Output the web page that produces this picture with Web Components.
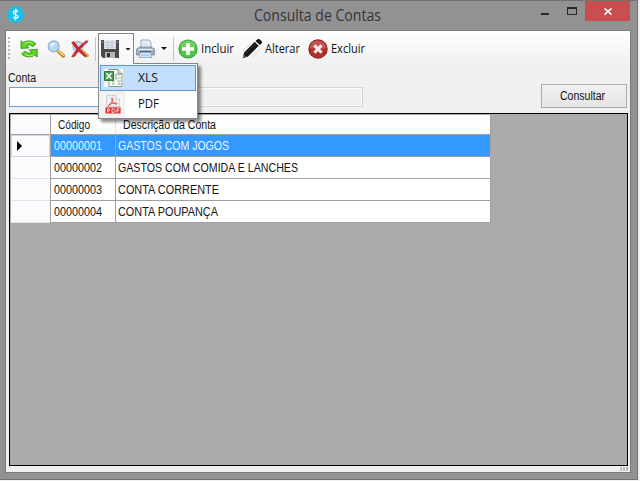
<!DOCTYPE html>
<html lang="pt-BR"><head><meta charset="utf-8"><title>Consulta de Contas</title>
<style>html,body{margin:0;width:640px;height:481px;overflow:hidden;background:#f1f1f1}</style></head><body>
<app-window></app-window>
<script>
const define=(name,html,init)=>customElements.define(name,class extends HTMLElement{
  constructor(){super();this.attachShadow({mode:'open'}).innerHTML=html}
  connectedCallback(){if(init)init.call(this,this.shadowRoot)}
});

// Single-line label condensed or widened to its "w" attribute.
define('fit-text',`<style>:host{display:block;white-space:nowrap;flex:none;line-height:16px}span{display:inline-block;transform-origin:0 50%}</style><span><slot></slot></span>`,function(r){
  const s=r.querySelector('span'),w=+this.getAttribute('w');
  this.style.width=w+'px';
  s.style.transform=`scaleX(${w/s.getBoundingClientRect().width})`;
});

const icons={
app:`<svg viewBox="0 0 18 18"><circle cx="9" cy="9" r="8.5" fill="#16c0ef"/><path d="M11.6 6.2C11.2 4.8 6.9 4.3 6.8 6.8c0 2.3 4.8 1.8 4.8 4.4 0 2.4-4.5 2.3-5.1.3M9.5 2.8 8.8 15" fill="none" stroke="#f4ffff" stroke-width="1.4"/></svg>`,
refresh:`<svg viewBox="0 0 18 18"><g stroke="#258a0c" stroke-width=".8" stroke-linejoin="round" fill="#62d51d"><path d="M1 .8 3.4 2.6C6.5.1 12.5.2 16 3.8L13 6.6C10.8 4.7 8.3 4.4 6.6 5.6L9 7.9 1 8.4Z"/><path d="M17.2 17 14.6 15C11.4 17.8 5.2 17.5 1.6 14L4.8 11.2C7.2 13.2 9.9 13.6 11.6 12.4L9.4 10 17.2 9.2Z"/></g><path d="M4.5 3.6Q8.4.8 12.6 3M13.5 15Q9 17 5 14.5" stroke="#a6f161" fill="none"/></svg>`,
search:`<svg viewBox="0 0 18 18"><path d="m11 11 5.3 4.8" stroke="#b97b2b" stroke-width="3.6" stroke-linecap="round"/><path d="m11.3 10.8 5 4.5" stroke="#ffc85e" stroke-width="2" stroke-linecap="round"/><circle cx="6.7" cy="6.4" r="5.4" fill="#b5daf6" stroke="#9ab6d2" stroke-width="1.4"/><path d="M3 6.5Q3.6 2.8 8 2.7 6.5 6.5 3 6.5" fill="#eef8ff"/></svg>`,
clear:`<svg viewBox="0 0 18 18"><path d="m11 11 5.3 4.8" stroke="#e0a445" stroke-width="3.2" stroke-linecap="round"/><circle cx="7" cy="6.5" r="5" fill="#c6e1f6" stroke="#9db9d3" stroke-width="1.3"/><path d="M.7 2.6 3 1.6Q7 8 15.6 16l-1.5 1Q6 11 .7 2.6M15.5.5 17 1.6Q9 7.5 3.5 16.5L.8 16.8Q6 7.5 15.5.5" fill="#d52a30" stroke="#b9242c" stroke-width=".8"/></svg>`,
save:`<svg viewBox="0 0 18 18"><path d="M0 0h18v18H2L0 16Z" fill="#4b4b4d"/><path d="M3 0h12v9H3Z" fill="#e2e6ec"/><path d="M3 2.5h12M3 5h12M3 7.2h12M7 0v9M11 0v9" stroke="#b8bec8" stroke-width=".7"/><path d="M4 12h10v6H4Z" fill="#b5b5b7"/><path d="M6 13h3v4H6Z" fill="#343436"/><path d="M15.8 1h1.2v2h-1.2M1 1h1v2H1" fill="#888"/></svg>`,
print:`<svg viewBox="0 0 19 19"><path d="M5 9V1h8l2 3v5" fill="#f3f8fe" stroke="#8299b6" stroke-width=".9"/><path d="M6.5 4H12M6.5 6H13" stroke="#bdd1e8"/><path d="M.6 10 4 8h11l3.4 2v6H.6Z" fill="#9dabbb" stroke="#75879a" stroke-width=".8"/><path d="M2 10.5h15" stroke="#eaf0f6" stroke-width="1.2"/><path d="M4 12h11v1.4H4Z" fill="#50657c"/><path d="M4.2 13.4h10.6l1.2 5H3Z" fill="#ddecfd" stroke="#7293bb" stroke-width=".7"/><path d="M5 16h9" stroke="#83afe2"/></svg>`,
add:`<svg viewBox="0 0 20 20"><circle cx="10" cy="10" r="9.6" fill="#36a83a"/><circle cx="10" cy="10" r="8.6" fill="#4fc44b"/><path d="M2 8Q4 1.5 10 1.5T18 8Q10 10 2 8" fill="#83d76b" opacity=".6"/><path d="M8.2 4h3.6v4.2H16v3.6h-4.2V16H8.2v-4.2H4V8.2h4.2Z" fill="#fff"/></svg>`,
edit:`<svg viewBox="0 0 20 20"><path d="m.8 13 8-9M11 18l8-9" stroke="#d4d4d4" stroke-width=".8"/><path d="M.8 19.2 2 13.7 12.7 2.8 16.8 6.8 6 17.6Z" fill="#151515"/><path d="m13.5 2 1.7-1.6Q17-.5 19 1.5t.5 3L17.8 6Z" fill="#111"/><path d="m3.8 14.8 9.8-10M1.2 18.9l1-3 1.8 1.9Z" stroke="#777" stroke-width=".4" fill="#555"/><path d="m12.8 2.8 4.1 4" stroke="#ccc" stroke-width=".6"/></svg>`,
remove:`<svg viewBox="0 0 20 20"><circle cx="10" cy="10" r="9.7" fill="#8b2323"/><circle cx="10" cy="10" r="8.7" fill="#b02f2d"/><path d="M1.8 9Q3 1.5 10 1.5T18.2 9Q10 11 1.8 9" fill="#d77b74" opacity=".5"/><path d="m6.4 6.4 7.2 7.2M13.6 6.4l-7.2 7.2" stroke="#f2eaea" stroke-width="3"/></svg>`,
xls:`<svg viewBox="0 0 19 18"><path d="M5 .5h9l4 4v13H5Z" fill="#fff" stroke="#849c86"/><path d="M14 .5v4h4" fill="#dce8dc" stroke="#78917b"/><path d="M10 6h7M8 9h9M8 12h3M13 12h4M8 15h3M13 15h4M12 4v7M9 12v4M15 12v4" stroke="#a5b8a7"/><path d="M.5 2.5h9v9h-9Z" fill="#4c9c58" stroke="#2f7a3c"/><path d="m2.4 4.3 5 5.4m0-5.4-5 5.4" stroke="#f0fff0" stroke-width="1.5"/></svg>`,
pdf:`<svg viewBox="0 0 18 20"><path d="M2 .5h10l4 4V12H2Z" fill="#eee" stroke="#c4c4c4" stroke-width=".8"/><path d="M12 .5v4h4" fill="#fafafa" stroke="#bbb" stroke-width=".7"/><path d="M4 11.2c3-1.6 5.3-6 4.6-7.6-.6-1-1.5.4-.7 2 .9 2.2 2.8 4.2 4.9 4 1-.4.3-1.3-1.3-1.2-2.3.1-5.4 1-7.2 2.6-.8.8-.6 1.2-.3.2Z" fill="none" stroke="#dc494a" stroke-width="1"/><path d="M1 13h16v6.5H1Z" fill="#df3034"/><path d="M3.5 18.5v-4h1.3q2.3 1.2 0 2.3H3.5M8 14.5v4q3.5 0 3.5-2T8 14.5M13.2 18.5v-4h2.7m-2.7 2h2.2" fill="none" stroke="#fff" stroke-width=".8"/></svg>`
};
customElements.define('ui-icon',class extends HTMLElement{connectedCallback(){
  if(this.shadowRoot)return;
  this.attachShadow({mode:'open'}).innerHTML=`<style>:host{display:block;flex:none}svg{display:block;width:100%;height:100%;overflow:visible}</style>${icons[this.getAttribute('name')]}`}});

define('title-bar',`<style>
:host{display:grid;grid-template-columns:254px 1fr 97px;height:29px;color:#353535;box-sizing:border-box;border-top:1px solid #737173}
ui-icon{width:17px;height:17px;margin:5px 0 0 7px}
fit-text{font:15.5px "Open Sans",sans-serif;line-height:22px;margin-top:3px}
.c{display:flex}.min{flex:none;width:8px;height:2px;background:#282828;margin:12px 18px 0 1px}
.max{flex:none;box-sizing:border-box;width:10px;height:8px;border:1px solid #282828;border-top-width:2px;margin-top:6px}
.close{flex:none;width:45px;height:20px;background:#c84f50;margin-left:8px;display:flex;justify-content:center}
.close svg{width:8px;height:7px;margin-top:7px;margin-left:1px}
</style><ui-icon name="app"></ui-icon><fit-text w="127">Consulta de Contas</fit-text>
<div class="c"><div class="min"></div><div class="max"></div><div class="close"><svg viewBox="0 0 8 8" preserveAspectRatio="none"><path d="m.5 .5 7 7m0-7-7 7" stroke="#fff" stroke-width="1.8"/></svg></div></div>`);

define('export-menu',`<style>
:host{display:block;box-sizing:border-box;width:100px;height:56px;border:1px solid #878787;background:linear-gradient(90deg,#f1f1f1 26px,#fdfdfd 26px);box-shadow:3px 3px 3px #0007;padding:1px;font:12px "Open Sans",sans-serif;color:#111}
div{box-sizing:border-box;height:26px;display:flex;align-items:center;border:1px solid transparent;padding-left:3px}
.on{background:#c2deff;border-color:#5b9acb}ui-icon{width:19px;height:18px;background:#f4f8f8}
.p{width:18px;height:19px;margin-right:1px}fit-text{margin-left:15px}
</style><div class="on"><ui-icon name="xls"></ui-icon><fit-text w="20">XLS</fit-text></div><div><ui-icon class="p" name="pdf"></ui-icon><fit-text w="21">PDF</fit-text></div>`);

define('tool-bar',`<style>
:host{display:flex;height:35px;background:linear-gradient(#fefefe,#f0f0f0);font:12.3px "Open Sans",sans-serif;color:#111;align-items:center;padding-left:2px;box-sizing:border-box}
.grip{width:2px;height:23px;background:repeating-linear-gradient(#b8b8b8 0 2px,transparent 2px 4px);margin-right:10px}
ui-icon{width:18px;height:18px}.big{width:20px;height:20px}
.sep{width:1px;height:24px;background:#c4c4c4}.arr{flex:none;width:6px;height:3px;background:#111;clip-path:polygon(0 0,100% 0,50% 100%)}
.save{position:relative;box-sizing:border-box;width:36px;height:31px;display:flex;align-items:center;border:1px solid #858585;border-bottom:0;padding-left:2px;align-self:flex-end;margin:0 0 2px 2px;background:#f9f9f9}
.save ui-icon{margin-right:6px}export-menu{position:absolute;left:-1px;top:29px;z-index:2}
.gap{position:absolute;z-index:3;left:0;top:29px;width:34px;height:1px;background:#f5f5f5}
</style><div class="grip"></div><ui-icon name="refresh"></ui-icon><ui-icon name="search" style="margin-left:9px"></ui-icon><ui-icon name="clear" style="margin:0 6px"></ui-icon><div class="sep"></div>
<div class="save"><ui-icon name="save"></ui-icon><div class="arr"></div><export-menu></export-menu><div class="gap"></div></div>
<ui-icon name="print" style="width:19px;height:19px;margin:0 6px 0 2px"></ui-icon><div class="arr"></div><div class="sep" style="margin:0 4px 0 6px"></div>
<ui-icon class="big" name="add"></ui-icon><fit-text w="33" style="margin:0 9px 0 3px">Incluir</fit-text>
<ui-icon class="big" name="edit" style="margin-left:-1px"></ui-icon><fit-text w="35" style="margin:0 8px 0 3px">Alterar</fit-text>
<ui-icon class="big" name="remove"></ui-icon><fit-text w="34" style="margin-left:3px">Excluir</fit-text>`);

define('search-form',`<style>
:host{display:grid;grid-template-columns:354px 86px;justify-content:space-between;height:47px;padding:0 3px;font:12px "Liberation Sans",sans-serif;color:#111}
.row{display:flex}.in{box-sizing:border-box;width:102px;height:20px;border:1px solid #6c9fd0;background:#fff}
.ro{box-sizing:border-box;flex:1;height:20px;border:1px solid #d4d4d4;box-shadow:inset 0 0 0 1px #fbfbfb}
.b{box-sizing:border-box;height:24px;margin-top:18px;border:1px solid #acacac;background:linear-gradient(#f0f0f0,#e5e5e5);display:flex;justify-content:center;align-items:center;padding-right:3px}
</style><div><fit-text w="28" style="margin:4px 0 1px -1px">Conta</fit-text><div class="row"><div class="in"></div><div class="ro"></div></div></div><div class="b"><fit-text w="45">Consultar</fit-text></div>`);

define('data-row',`<style>
:host{display:grid;grid-template-columns:39px 64px 374px;column-gap:1px;height:22px;background:#a0a0a0;box-sizing:border-box;border-bottom:1px solid #a0a0a0;width:480px;padding-right:1px;color:#141414}
.h{background:#fbfbfd;display:flex;align-items:center;padding-left:6px;margin-bottom:-1px;border-bottom:1px solid #e3e4ea;box-sizing:border-box}
.c{background:#fff;display:flex;align-items:center;padding-left:2px}
.code{padding-left:3px}
:host([selected]) .c{background:#3399ff;color:#e8f5ff}
i{display:none;width:5px;height:10px;background:#000;clip-path:polygon(0 0,100% 50%,0 100%)}
:host([selected]) i{display:block}:host([selected]) .h{border:1px solid #d3d8e0;padding-left:5px}
:host([head]){height:20px}:host([head]) .c{background:#fdfdfd;padding-left:7px}:host([head]) .h{margin:0;border:0}
:host([head]) .code{margin-right:-1px;box-shadow:inset -1px 0 #e2e2e6}
</style><div class="h"><i></i></div><div class="c code"><slot name="code"></slot></div><div class="c"><slot></slot></div>`);

define('data-table',`<style>
:host{display:block;box-sizing:border-box;width:619px;height:353px;margin-left:3px;border:1px solid #000;background:#ababab;padding:1px;font:12px "Liberation Sans",sans-serif}
</style>
<data-row head><fit-text slot="code" w="32">Código</fit-text><fit-text w="93">Descrição da Conta</fit-text></data-row>
<data-row selected><fit-text slot="code" w="48">00000001</fit-text><fit-text w="111">GASTOS COM JOGOS</fit-text></data-row>
<data-row><fit-text slot="code" w="48">00000002</fit-text><fit-text w="180">GASTOS COM COMIDA E LANCHES</fit-text></data-row>
<data-row><fit-text slot="code" w="48">00000003</fit-text><fit-text w="101">CONTA CORRENTE</fit-text></data-row>
<data-row><fit-text slot="code" w="48">00000004</fit-text><fit-text w="100">CONTA POUPANÇA</fit-text></data-row>`);

define('app-window',`<style>
:host{display:block;box-sizing:border-box;width:638px;height:480px;background:#939293;border-right:1px solid #737173;border-bottom:1px solid #737173}
main{box-sizing:border-box;width:626px;height:443px;margin:1px 0 0 5px;border:1px solid #7b7a7b;background:#f0f0f0;display:flex;flex-direction:column}
.g{align-self:flex-end;width:8px;height:4px;margin:1px 2px 0 0;background:repeating-linear-gradient(90deg,#bbb 0 2px,transparent 2px 3px)}
</style><title-bar></title-bar><main><tool-bar></tool-bar><search-form></search-form><data-table></data-table><div class="g"></div></main>`);
</script></body></html>
